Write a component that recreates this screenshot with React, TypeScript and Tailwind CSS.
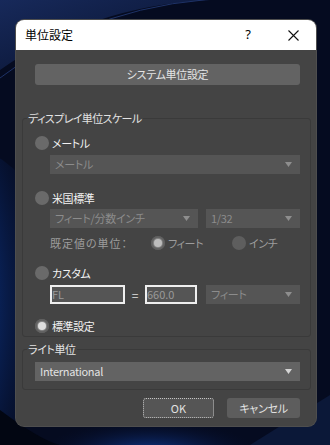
import React from 'react';

const JP = "font-['Noto_Sans_CJK_JP','Noto_Sans',sans-serif] [font-feature-settings:'palt']";

// 壁紙（背景の描画）
const Wallpaper: React.FC = () => (
  <svg className="absolute inset-0" width={330} height={445} viewBox="0 0 330 445">
    <defs>
      <radialGradient id="leftBlue" cx="0" cy="0.5" r="1">
        <stop offset="0" stopColor="#1a66e0" />
        <stop offset="0.45" stopColor="#0f3f9c" />
        <stop offset="1" stopColor="#061030" stopOpacity="0" />
      </radialGradient>
      <radialGradient id="bottomBlue" cx="0.5" cy="0.5" r="0.5">
        <stop offset="0" stopColor="#1240a0" />
        <stop offset="1" stopColor="#061030" stopOpacity="0" />
      </radialGradient>
      <linearGradient id="topArc" x1="0" y1="0" x2="1" y2="1">
        <stop offset="0" stopColor="#17295a" />
        <stop offset="1" stopColor="#07102a" />
      </linearGradient>
    </defs>
    <rect width="330" height="445" fill="#050b20" />
    <path d="M0 0 H210 Q90 6 0 70 Z" fill="url(#topArc)" />
    <path d="M0 78 Q100 0 240 -2" stroke="#1e3266" strokeWidth="1" fill="none" />
    <ellipse cx="-30" cy="300" rx="90" ry="150" fill="url(#leftBlue)" />
    <path d="M0 410 Q40 440 60 445 H0 Z" fill="#020612" />
    <ellipse cx="150" cy="455" rx="110" ry="35" fill="url(#bottomBlue)" />
    <path d="M250 445 L330 395 V445 Z" fill="#0b1838" />
  </svg>
);

const Radio: React.FC<{ checked?: boolean; dim?: boolean }> = ({ checked, dim }) => (
  <span
    className={`flex h-[14px] w-[14px] shrink-0 items-center justify-center rounded-full ${
      dim ? 'bg-[#5e5e5e]' : 'bg-[#6a6a6a]'
    } ${checked ? 'shadow-[inset_0_0_0_2px_#606060]' : ''}`}
  >
    {checked && (
      <span className={`h-[8px] w-[8px] rounded-full ${dim ? 'bg-[#bdbdbd]' : 'bg-[#dedede]'} shadow-[0_0_1px_1px_#8a8a8a]`} />
    )}
  </span>
);

const Arrow: React.FC<{ color: string }> = ({ color }) => (
  <svg width="7" height="5" viewBox="0 0 7 5" className="shrink-0">
    <path d="M0 0 H7 L3.5 5 Z" fill={color} />
  </svg>
);

const Select: React.FC<{ label: string; enabled?: boolean; className?: string }> = ({
  label,
  enabled,
  className = '',
}) => (
  <div
    className={`flex h-[19px] items-center justify-between pl-[5px] pr-[8px] ${
      enabled ? 'bg-[#636363] text-[#e2e2e2]' : 'bg-[#555555] text-[#8c8c8c]'
    } ${className}`}
  >
    <span className="text-[11px] leading-[19px] tracking-[-0.3px]">{label}</span>
    <Arrow color={enabled ? '#d4d4d4' : '#8e8e8e'} />
  </div>
);

const RadioRow: React.FC<{ label: string; checked?: boolean; className?: string }> = ({
  label,
  checked,
  className = '',
}) => (
  <div className={`flex h-[16px] items-center gap-[3px] ${className}`}>
    <Radio checked={checked} />
    <span className="text-[11px] leading-[16px] tracking-[-0.4px] text-[#f2f2f2]">{label}</span>
  </div>
);

export default function App() {
  return (
    <div className={`relative h-[445px] w-[330px] overflow-hidden ${JP}`}>
      <Wallpaper />

      <div className="relative pl-[16px] pt-[20px]">
        <div className="w-[300px] overflow-hidden rounded-[8px] bg-[#444444] shadow-[0_0_0_1px_#4e4e4e]">
          {/* タイトルバー */}
          <div className="flex h-[30px] items-center bg-white pl-[9px] text-black">
            <span className="flex-1 text-[12px]">単位設定</span>
            <span className="mr-[37px] text-[13px] font-['Noto_Sans',sans-serif]">?</span>
            <svg width="11" height="11" viewBox="0 0 11 11" className="mr-[17px]">
              <path d="M0.5 0.5 L10.5 10.5 M10.5 0.5 L0.5 10.5" stroke="#111" strokeWidth="1.1" />
            </svg>
          </div>

          {/* 本体 */}
          <div className="pb-[8px] pt-[14px]">
            <div className="ml-[19px] flex h-[21px] w-[265px] items-center justify-center rounded-[3px] bg-[#636363] text-[11px] tracking-[-0.3px] text-[#e4e4e4]">
              システム単位設定
            </div>

            <fieldset className="ml-[6px] mr-[5px] mt-[26px] rounded-[3px] border border-[#3a3a3a]">
              <legend className="ml-[4px] px-[1px] text-[11px] leading-[14px] tracking-[-0.6px] text-[#e2e2e2]">
                ディスプレイ単位スケール
              </legend>
              <div className="flex flex-col pb-[2px] pl-[12px] pr-[10px] pt-[10px]">
                <RadioRow label="メートル" />
                <Select label="メートル" className="ml-[15px] mt-[4px]" />

                <RadioRow label="米国標準" className="mt-[16px]" />
                <div className="ml-[15px] mt-[3px] flex gap-[8px]">
                  <Select label="フィート/分数インチ" className="w-[148px]" />
                  <Select label="1/32" className="flex-1" />
                </div>
                <div className="ml-[15px] mt-[7px] flex h-[16px] items-center text-[11px] text-[#9c9c9c]">
                  <span className="w-[101px] tracking-[1px]">既定値の単位：</span>
                  <div className="flex w-[81px] items-center gap-[3px]">
                    <Radio checked dim />
                    <span className="tracking-[-0.4px]">フィート</span>
                  </div>
                  <div className="flex items-center gap-[3px]">
                    <Radio dim />
                    <span className="tracking-[-0.4px]">インチ</span>
                  </div>
                </div>

                <RadioRow label="カスタム" className="mt-[14px]" />
                <div className="ml-[15px] mt-[4px] flex h-[19px] items-center">
                  <div className="h-[19px] w-[75px] border-2 border-[#efefef] bg-[#555555] text-[11px] leading-[15px] text-[#9a9a9a]">
                    FL
                  </div>
                  <span className="w-[20px] text-center text-[12px] text-[#e0e0e0]">=</span>
                  <div className="h-[19px] w-[52px] border-2 border-[#efefef] bg-[#555555] text-[11px] leading-[15px] text-[#9a9a9a]">
                    660.0
                  </div>
                  <Select label="フィート" className="ml-[9px] flex-1" />
                </div>

                <RadioRow label="標準設定" checked className="mt-[14px]" />
              </div>
            </fieldset>

            <fieldset className="ml-[6px] mr-[5px] mt-[5px] rounded-[3px] border border-[#3a3a3a]">
              <legend className="ml-[4px] px-[1px] text-[11px] leading-[14px] tracking-[-0.4px] text-[#e2e2e2]">
                ライト単位
              </legend>
              <div className="pb-[8px] pl-[12px] pr-[10px] pt-[6px]">
                <Select label="International" enabled />
              </div>
            </fieldset>

            <div className="mr-[16px] mt-[8px] flex justify-end gap-[13px]">
              <div className="flex h-[20px] w-[71px] items-center justify-center rounded-[3px] border border-dotted border-[#c4c4c4] bg-[#555555] text-[11px] text-[#e2e2e2]">
                OK
              </div>
              <div className="flex h-[20px] w-[73px] items-center justify-center rounded-[3px] bg-[#5d5d5d] text-[11px] tracking-[-0.3px] text-[#e2e2e2]">
                キャンセル
              </div>
            </div>
          </div>
        </div>
      </div>
    </div>
  );
}
